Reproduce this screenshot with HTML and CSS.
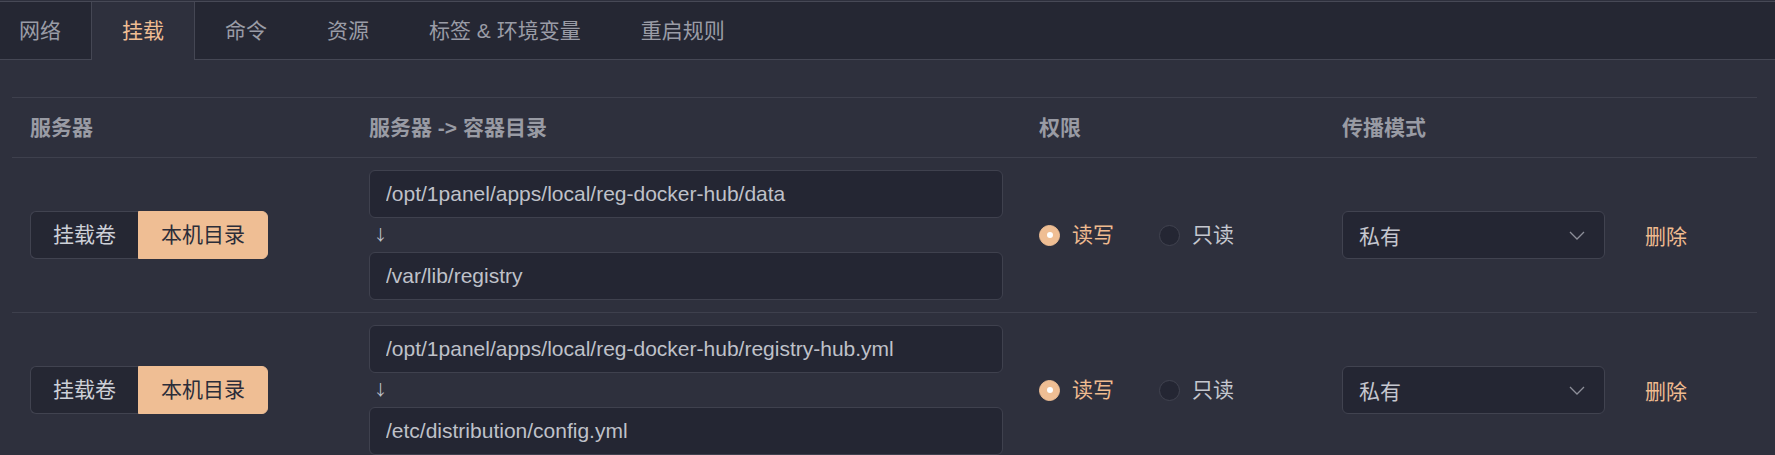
FILE: index.html
```html
<!DOCTYPE html>
<html lang="zh-CN">
<head>
  <meta charset="UTF-8">
  <meta name="viewport" content="width=device-width, initial-scale=1.0">
  <title>挂载</title>
  <link rel="stylesheet" href="styles.css">
</head>
<body>
  <div class="tabs">
    <div class="tab-nav">
      <div class="tab-list">
        <div class="tab">网络</div>
        <div class="tab active">挂载</div>
        <div class="tab">命令</div>
        <div class="tab">资源</div>
        <div class="tab">标签 &amp; 环境变量</div>
        <div class="tab">重启规则</div>
      </div>
    </div>

    <div class="tab-body">
      <table class="mounts">
        <colgroup>
          <col class="col-type">
          <col class="col-path">
          <col class="col-mode">
          <col class="col-prop">
          <col class="col-op">
        </colgroup>
        <thead>
          <tr>
            <th>服务器</th>
            <th>服务器 -&gt; 容器目录</th>
            <th>权限</th>
            <th>传播模式</th>
            <th></th>
          </tr>
        </thead>
        <tbody>
          <tr>
            <td>
              <div class="seg">
                <button class="seg-btn">挂载卷</button>
                <button class="seg-btn on">本机目录</button>
              </div>
            </td>
            <td>
              <input class="input" type="text" value="/opt/1panel/apps/local/reg-docker-hub/data">
              <div class="arrow">↓</div>
              <input class="input" type="text" value="/var/lib/registry">
            </td>
            <td>
              <div class="radios">
                <label class="radio checked"><span class="radio-dot"></span>读写</label>
                <label class="radio"><span class="radio-dot"></span>只读</label>
              </div>
            </td>
            <td>
              <div class="select">
                <span>私有</span>
                <svg class="chevron" width="16" height="9" viewBox="0 0 16 9"><polyline points="1,1 8,8 15,1" /></svg>
              </div>
            </td>
            <td><a class="link">删除</a></td>
          </tr>
          <tr>
            <td>
              <div class="seg">
                <button class="seg-btn">挂载卷</button>
                <button class="seg-btn on">本机目录</button>
              </div>
            </td>
            <td>
              <input class="input" type="text" value="/opt/1panel/apps/local/reg-docker-hub/registry-hub.yml">
              <div class="arrow">↓</div>
              <input class="input" type="text" value="/etc/distribution/config.yml">
            </td>
            <td>
              <div class="radios">
                <label class="radio checked"><span class="radio-dot"></span>读写</label>
                <label class="radio"><span class="radio-dot"></span>只读</label>
              </div>
            </td>
            <td>
              <div class="select">
                <span>私有</span>
                <svg class="chevron" width="16" height="9" viewBox="0 0 16 9"><polyline points="1,1 8,8 15,1" /></svg>
              </div>
            </td>
            <td><a class="link">删除</a></td>
          </tr>
        </tbody>
      </table>
    </div>
  </div>
</body>
</html>
```

FILE: styles.css
```css
body {
  margin: 0;
  padding-top: 1px;
  background-color: #2e303d;
  font-family: "Liberation Sans", "Noto Sans CJK SC", sans-serif;
  font-size: 21px;
  color: #c3c5cd;
  overflow: hidden;
}

.tab-nav {
  height: 57px;
  background-color: #252733;
  border-top: 1px solid #474956;
  border-bottom: 1px solid #454754;
}
.tab-list {
  display: flex;
  margin-left: -11px;
}
.tab {
  height: 57px;
  line-height: 57px;
  padding: 0 30px;
  color: #9a9ca6;
  white-space: nowrap;
}
.tab.active {
  height: 58px;
  margin-bottom: -1px;
  color: #efbd93;
  background-color: #2e303d;
  border-left: 1px solid #454754;
  border-right: 1px solid #454754;
}

.tab-body {
  padding: 37px 18px 0 12px;
}
.mounts {
  width: 1745px;
  table-layout: fixed;
  border-collapse: separate;
  border-spacing: 0;
  border-top: 1px solid #3e404d;
}
.col-type { width: 339px; }
.col-path { width: 670px; }
.col-mode { width: 303px; }
.col-prop { width: 303px; }
.col-op { width: 130px; }

.mounts th {
  padding: 12px 18px;
  line-height: 35px;
  text-align: left;
  font-weight: bold;
  color: #999ba4;
  border-bottom: 1px solid #3e404d;
}
.mounts td {
  padding: 12px 18px;
  vertical-align: middle;
  border-bottom: 1px solid #3e404d;
}

/* host dir / volume switch */
.seg {
  display: flex;
}
.seg-btn {
  height: 48px;
  padding: 0 22px;
  font: inherit;
  line-height: 46px;
  color: #cdd0d8;
  background-color: #252733;
  border: 1px solid #414350;
  border-right: none;
  border-radius: 6px 0 0 6px;
}
.seg-btn.on {
  color: #2b2d39;
  background-color: #efbe94;
  border: 1px solid #efbe94;
  border-radius: 0 6px 6px 0;
}

.input {
  display: block;
  box-sizing: border-box;
  width: 100%;
  height: 48px;
  padding: 0 16px;
  font: inherit;
  color: #bfc1c9;
  background-color: #242633;
  border: 1px solid #3f414e;
  border-radius: 6px;
  outline: none;
}
.arrow {
  height: 34px;
  line-height: 32px;
  padding-left: 4px;
  color: #bfc1c9;
  font-family: "Noto Sans CJK SC", sans-serif;
  font-size: 15px;
}

.radios {
  display: flex;
  align-items: center;
}
.radio {
  display: flex;
  align-items: center;
  margin-right: 45px;
  line-height: 30px;
  color: #c5c7cf;
}
.radio-dot {
  box-sizing: border-box;
  width: 21px;
  height: 21px;
  margin-right: 12px;
  border-radius: 50%;
  background-color: #242633;
  border: 1px solid #414350;
  display: flex;
  justify-content: center;
  align-items: center;
}
.radio.checked {
  color: #efbb90;
}
.radio.checked .radio-dot {
  background-color: #efbe94;
  border-color: #efbe94;
}
.radio.checked .radio-dot::after {
  content: "";
  width: 6px;
  height: 6px;
  border-radius: 50%;
  background-color: #fff;
}

.select {
  box-sizing: border-box;
  width: 263px;
  height: 48px;
  display: flex;
  align-items: center;
  justify-content: space-between;
  padding: 0 19px 0 16px;
  color: #c5c7cf;
  background-color: #242633;
  border: 1px solid #414350;
  border-radius: 6px;
}
.chevron polyline {
  fill: none;
  stroke: #8d8f99;
  stroke-width: 1.3;
}

.link {
  color: #efbb90;
  cursor: pointer;
}
```
